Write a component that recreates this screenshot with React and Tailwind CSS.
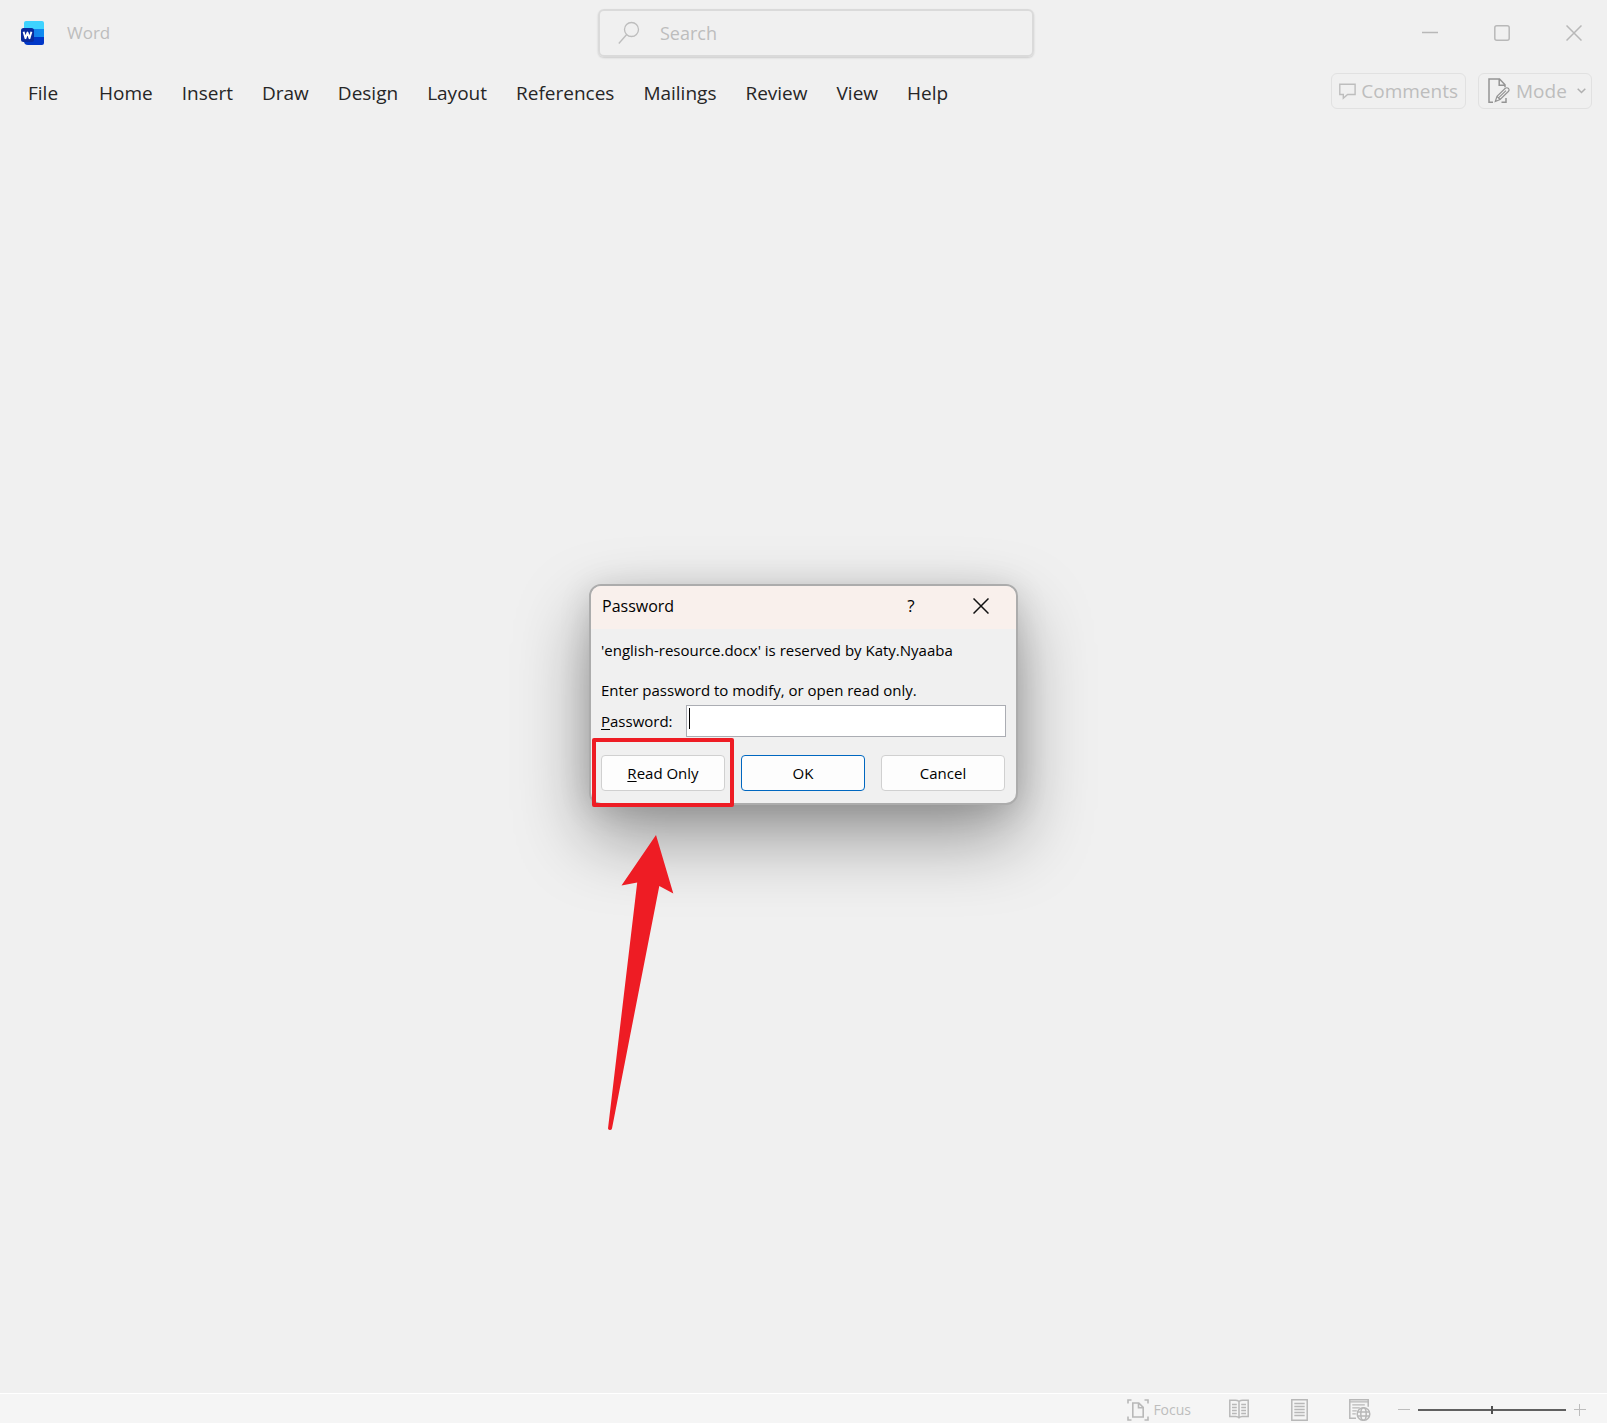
import React, { useState } from 'react'

const menuItems = ['Home', 'Insert', 'Draw', 'Design', 'Layout', 'References', 'Mailings', 'Review', 'View', 'Help']

const WordLogo = () => (
  <svg width="24" height="24" viewBox="0 0 24 24" aria-hidden="true">
    <defs>
      <clipPath id="page">
        <path d="M5 0h16a2 2 0 0 1 2 2v20a2 2 0 0 1-2 2H7a4 4 0 0 1-4-4V2a2 2 0 0 1 2-2z" />
      </clipPath>
      <linearGradient id="middle" x1="0" x2="1">
        <stop offset="0" stopColor="#1f6fe0" />
        <stop offset="1" stopColor="#0f8df2" />
      </linearGradient>
    </defs>
    <g clipPath="url(#page)">
      <rect width="23" height="9" fill="#3fd3ff" />
      <rect y="8" width="23" height="8" fill="url(#middle)" />
      <rect y="16" width="23" height="8" fill="#0037c8" />
    </g>
    <rect y="7" width="13" height="14" rx="2.5" fill="#0a2a9e" />
    <path d="M2.6 10.8l1.9 6.4 2-5.6 2 5.6 1.9-6.4" fill="none" stroke="#fff" strokeWidth="1.9" strokeLinejoin="round" />
  </svg>
)

const SearchIcon = () => (
  <svg width="22" height="24" viewBox="0 0 22 24" fill="none" stroke="#bdbdbd" strokeWidth="1.3" aria-hidden="true">
    <circle cx="13.5" cy="8.5" r="7" />
    <path d="M8.5 13.7L.8 22.5" />
  </svg>
)

const CommentIcon = () => (
  <svg width="17" height="17" viewBox="0 0 17 17" fill="none" stroke="#bdbdbd" strokeWidth="1.4" aria-hidden="true">
    <path d="M.8 1.2h15.3v10.3H8.6l-4.3 3.8v-3.8H.8z" />
  </svg>
)

const ModeIcon = () => (
  <svg width="22" height="26" viewBox="0 0 22 26" fill="none" stroke="#949494" strokeWidth="1.5" aria-hidden="true">
    <path d="M5 24.2H1V1h10.5L17 6.8v2.4M11.2 1v6.3H17" />
    <path d="M18 20v4.2h-4.5" />
    <path d="M7.3 23.5l1.7-5.2 8.3-8q1.8-1.2 3.2.2 1.2 1.5-.2 3l-8.2 8zM9 18.3l3.1 3.2M10.5 19.9l7.5-7.3" strokeWidth="1.2" />
  </svg>
)

const FocusIcon = () => (
  <svg width="22" height="22" viewBox="0 0 22 22" fill="none" stroke="#b8b8b8" strokeWidth="1.6" aria-hidden="true">
    <path d="M1 4.5V1h3.5M17.5 1H21v3.5M21 17.5V21h-3.5M4.5 21H1v-3.5" />
    <path d="M5.8 4h6l4.4 4.4V18H5.8zM11.5 4v4.7h4.7" />
  </svg>
)

const ReadIcon = () => (
  <svg width="20" height="22" viewBox="0 0 20 22" fill="none" stroke="#b8b8b8" strokeWidth="1.5" aria-hidden="true">
    <path d="M10 2.5Q8.5 1.3 6.5 1.3H.8v16.2h6q2 0 3.2 1.3 1.2-1.3 3.2-1.3h6V1.3h-5.7Q11.5 1.3 10 2.5zv16" />
    <path d="M3 5.5h4.8M3 8.5h4.8M3 11.5h4.8M3 14.5h4.8M12.2 5.5H17M12.2 8.5H17M12.2 11.5H17M12.2 14.5H17" strokeWidth="1.3" />
  </svg>
)

const PrintIcon = () => (
  <svg width="17" height="22" viewBox="0 0 17 22" fill="none" stroke="#b8b8b8" strokeWidth="1.5" aria-hidden="true">
    <path d="M.8.8h15.4v20.4H.8z" />
    <path d="M3.3 4.5h10.4M3.3 7.5h10.4M3.3 10.5h10.4M3.3 13.5h10.4M3.3 16.5h10.4" strokeWidth="1.3" />
  </svg>
)

const WebIcon = () => (
  <svg width="22" height="22" viewBox="0 0 22 22" fill="none" stroke="#b8b8b8" strokeWidth="1.5" aria-hidden="true">
    <path d="M7 19.2H.8V.8h18.4v7" />
    <path d="M.8 2.8h18.4M3.3 5.8h12.5M3.3 8.8h7.5M3.3 11.8h4.5M3.3 14.8h3.5" strokeWidth="1.3" />
    <circle cx="14.5" cy="15" r="6.3" />
    <ellipse cx="14.5" cy="15" rx="2.7" ry="6.3" />
    <path d="M8.2 13h12.6M8.2 17h12.6" strokeWidth="1.3" />
  </svg>
)

const TitleBar = () => (
  <div className="flex h-[66px] items-center">
    <div className="flex flex-1 items-center gap-[22px] pl-[21px]">
      <WordLogo />
      <span className="text-[17px] text-[#bdbdbd]">Word</span>
    </div>
    <label className="ml-1 flex h-12 w-[436px] items-center gap-5 rounded-md border-2 border-[#dadada] px-[18px] shadow-[0_1px_2px_rgba(0,0,0,0.15)]">
      <SearchIcon />
      <input
        type="text"
        aria-label="Search"
        placeholder="Search"
        className="min-w-0 flex-1 bg-transparent text-[18px] outline-none placeholder:text-[#bdbdbd]"
      />
    </label>
    <div className="flex flex-1 justify-end gap-[6px]">
      <button aria-label="Minimize" className="flex h-10 w-[66px] items-center justify-center">
        <svg width="16" height="16" stroke="#b8b8b8" strokeWidth="1.5"><path d="M0 7.5h16" /></svg>
      </button>
      <button aria-label="Maximize" className="flex h-10 w-[66px] items-center justify-center">
        <svg width="16" height="16" fill="none" stroke="#b8b8b8" strokeWidth="1.5"><rect x=".8" y=".8" width="14.4" height="14.4" rx="2" /></svg>
      </button>
      <button aria-label="Close" className="flex h-10 w-[66px] items-center justify-center">
        <svg width="16" height="16" stroke="#b8b8b8" strokeWidth="1.5"><path d="M.5.5l15 15M15.5.5l-15 15" /></svg>
      </button>
    </div>
  </div>
)

const MenuBar = () => (
  <div className="flex h-[50px] items-center justify-between pr-[15px] pl-7">
    <nav className="flex items-center gap-[29px] pt-1 text-[19px] text-[#262626]">
      <button className="mr-3">File</button>
      {menuItems.map((item) => (
        <button key={item}>{item}</button>
      ))}
    </nav>
    <div className="flex gap-3 text-[19px] text-[#bdbdbd]">
      <button className="flex h-9 w-[135px] items-center justify-between rounded-md border border-[#e1e1e1] px-[7px]">
        <CommentIcon />
        Comments
      </button>
      <button className="flex h-9 w-[114px] items-center gap-[6px] rounded-md border border-[#e1e1e1] pr-[5px] pl-[9px]">
        <ModeIcon />
        Mode
        <svg className="ml-auto" width="9" height="6" fill="none" stroke="#b0b0b0" strokeWidth="1.5" aria-hidden="true"><path d="M.7.7l3.8 3.8L8.3.7" /></svg>
      </button>
    </div>
  </div>
)

const StatusBar = () => {
  const [zoom, setZoom] = useState(50)

  return (
    <footer className="flex h-[30px] items-center justify-end border-t border-white bg-[#f5f5f5] pt-[2px] pr-[21px]">
      <button className="mr-[38px] flex items-center gap-1 text-[14px] leading-5 text-[#bdbdbd]">
        <FocusIcon />
        Focus
      </button>
      <button aria-label="Read Mode" className="mr-[42px]"><ReadIcon /></button>
      <button aria-label="Print Layout" className="mr-[41px]"><PrintIcon /></button>
      <button aria-label="Web Layout" className="mr-[27px]"><WebIcon /></button>
      <div className="flex items-center gap-2">
        <button aria-label="Zoom out">
          <svg width="12" height="12" stroke="#bdbdbd"><path d="M0 5.5h12" /></svg>
        </button>
        <input
          type="range"
          aria-label="Zoom"
          min="0"
          max="100"
          value={zoom}
          onChange={(e) => setZoom(e.target.value)}
          className="h-2 w-[148px] appearance-none bg-[linear-gradient(#606060,#606060)] bg-[length:100%_2px] bg-center bg-no-repeat [&::-webkit-slider-thumb]:h-2 [&::-webkit-slider-thumb]:w-[2px] [&::-webkit-slider-thumb]:appearance-none [&::-webkit-slider-thumb]:bg-[#505050]"
        />
        <button aria-label="Zoom in">
          <svg width="12" height="12" stroke="#bdbdbd"><path d="M0 5.5h12M5.5 0v12" /></svg>
        </button>
      </div>
    </footer>
  )
}

// Red box and arrow pointing at the Read Only button
const Highlight = () => (
  <>
    <div className="pointer-events-none absolute top-[152px] left-px h-[69px] w-[142px] rounded-[2px] border-4 border-[#ee1c24]" />
    <svg className="pointer-events-none absolute top-[248px] left-4" width="70" height="300" fill="#ee1c24" aria-hidden="true">
      <path d="M49 1L66.3 59.5 52.3 52 5 294.5q-.5 1.500-2 1.500t-2-1.500L30.2 48.5 14.5 51.5z" />
    </svg>
  </>
)

const PasswordDialog = () => {
  const [password, setPassword] = useState('')

  return (
    <div
      role="dialog"
      aria-labelledby="dialog-title"
      className="relative w-[429px] rounded-[12px] border-2 border-[#acacac] bg-[#f0f0f0] text-[15px] leading-5 text-black shadow-[0_32px_72px_rgba(0,0,0,0.38),0_4px_32px_rgba(0,0,0,0.12)]"
    >
      <div className="flex h-[43px] items-center rounded-t-[10px] bg-[#f9f0ec] pb-[3px] pl-[11px]">
        <h1 id="dialog-title" className="flex-1 text-[16px]">Password</h1>
        <button aria-label="Help" className="w-[70px] text-[17px]">?</button>
        <button aria-label="Close" className="flex h-10 w-[70px] items-center justify-center">
          <svg width="16" height="16" stroke="#111" strokeWidth="1.5"><path d="M.5.5l15 15M15.5.5l-15 15" /></svg>
        </button>
      </div>
      <form className="px-[10px] pt-[11px] pb-3" onSubmit={(e) => e.preventDefault()}>
        <p>'english-resource.docx' is reserved by Katy.Nyaaba</p>
        <p className="mt-5">Enter password to modify, or open read only.</p>
        <div className="mt-[5px] flex items-center justify-between">
          <label htmlFor="password">
            <span className="underline underline-offset-2">P</span>assword:
          </label>
          <div className="relative flex">
            <input
              id="password"
              type="password"
              value={password}
              onChange={(e) => setPassword(e.target.value)}
              className="h-8 w-80 border border-[#abadb3] bg-white px-1 outline-none"
            />
            <span className="absolute top-[3px] left-[3px] h-[21px] w-px bg-black" />
          </div>
        </div>
        <div className="mt-[18px] grid grid-cols-3 gap-4 pr-px">
          <button type="button" className="h-9 rounded border border-[#d0d0d0] bg-[#fdfdfd]">
            <span className="underline underline-offset-2">R</span>ead Only
          </button>
          <button type="submit" className="h-9 rounded border border-[#0067c0] bg-[#fdfdfd]">OK</button>
          <button type="button" className="h-9 rounded border border-[#d0d0d0] bg-[#fdfdfd]">Cancel</button>
        </div>
      </form>
      <Highlight />
    </div>
  )
}

const App = () => {
  return (
    <div className="relative flex min-h-screen flex-col bg-[#f0f0f0] font-['Open_Sans','Noto_Sans',sans-serif]">
      <header>
        <TitleBar />
        <MenuBar />
      </header>
      <main className="flex-1" />
      <StatusBar />
      <div className="pointer-events-none absolute inset-0 flex items-center justify-center pb-[34px]">
        <div className="pointer-events-auto">
          <PasswordDialog />
        </div>
      </div>
    </div>
  )
}

export default App
